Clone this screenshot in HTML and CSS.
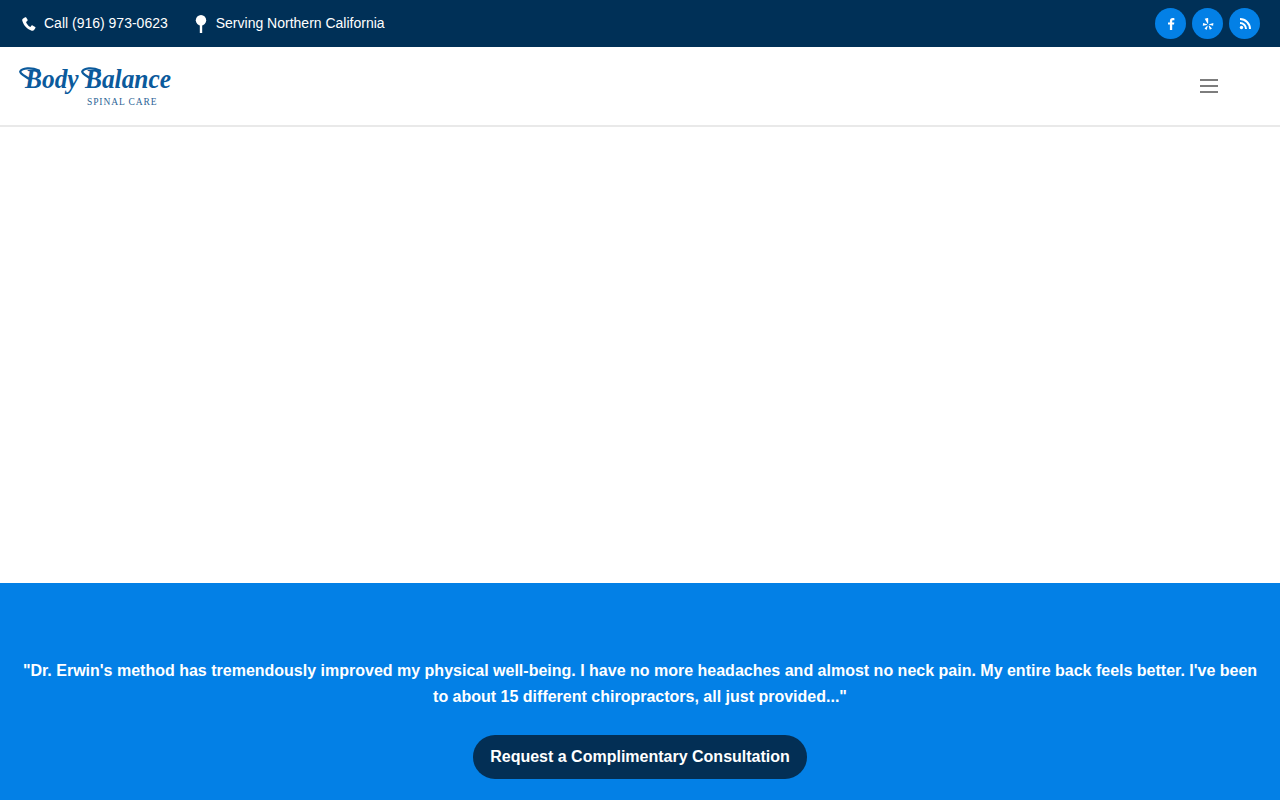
FILE: index.html
```
<!DOCTYPE html>
<html lang="en">
<head>
<meta charset="utf-8">
<title>Body Balance Spinal Care</title>
<link rel="stylesheet" href="styles.css">
</head>
<body>
<div class="topbar">
  <div class="contact">
    <a class="contact-item">
      <svg class="ico-phone" viewBox="0 0 16 16"><path d="M3.600.3 1.300 1.600C.3 2.200 0 3.300.4 4.500c1.500 5 5.800 9.700 10.700 11.100 1.100.4 2.100.1 2.700-.7l1.500-2.300c.3-.5.2-.9-.2-1.200l-3-1.800c-.4-.2-.9-.1-1.200.2l-1.100 1.300c-.3.3-.6.3-.9.100C7 9.900 5.700 8.300 4.800 6.300c-.2-.3-.1-.6.200-.9l1.200-1c.3-.3.400-.8.200-1.200L4.800.7C4.500.2 4 .1 3.600.3Z" fill="#fff"/></svg>
      <span>Call (916) 973-0623</span>
    </a>
    <a class="contact-item">
      <svg class="ico-pin" viewBox="0 0 12 18"><circle cx="6" cy="5.200" r="5.200" fill="#fff"/><rect x="4.800" y="9" width="2.400" height="9" fill="#fff"/></svg>
      <span>Serving Northern California</span>
    </a>
  </div>
  <div class="social">
    <a class="social-btn"><svg viewBox="0 0 12 12"><path d="M7.200 12V6.600h1.800l.3-2.100H7.200V3.200c0-.6.200-1 1-1h1.200V.2C9 .1 8.400 0 7.700 0 6 0 4.900 1 4.900 2.900v1.600H3v2.100h1.900V12Z" fill="#fff"/></svg></a>
    <a class="social-btn"><svg viewBox="0 0 12 12"><g fill="#fff"><path d="M5.300 0 2.700.7 5.400 5.500c.3.400.8.300.8-.2V.5C6.200.1 5.800-.1 5.300 0Z"/><path d="M4.900 6.200 1.100 5 .8 7.700l4-.8c.5-.1.500-.6.100-.7Z"/><path d="M5.200 7.800 2.500 10.600l2.100 1.300 1.100-3.800c.1-.4-.2-.5-.5-.3Z"/><path d="M6.700 7.900l1.100 3.900 2.200-1.300-2.800-2.900c-.3-.2-.6 0-.5.300Z"/><path d="M7.100 6.800l4 .9.300-2.600-4.200 1.200c-.4.100-.4.400-.1.500Z"/></g></svg></a>
    <a class="social-btn"><svg viewBox="0 0 12 12"><g fill="none" stroke="#fff" stroke-width="2"><path d="M1 5a6 6 0 0 1 6 6"/><path d="M1 1a10 10 0 0 1 10 10"/></g><circle cx="2.500" cy="9.500" r="1.700" fill="#fff"/></svg></a>
  </div>
</div>
<header class="navbar">
  <a class="logo" aria-label="Body Balance Spinal Care">
    <svg class="logo-art" viewBox="0 0 152 42">
      <text class="logo-name" x="6" y="22" textLength="146" lengthAdjust="spacingAndGlyphs">Body Balance</text>
      <g class="logo-swash">
        <path d="M20 4.500C12 1 3 2 1.200 5.500 1 8 6 10 9.500 12.500"/>
        <path d="M81 4.500C73 1 65 2 63.200 5.500 63 8 68 10 71.500 12.500"/>
      </g>
      <text class="logo-sub" x="68" y="39">SPINAL CARE</text>
    </svg>
  </a>
  <button class="menu-btn" aria-label="Menu"><span></span><span></span><span></span></button>
</header>
<main class="hero"></main>
<section class="testimonial">
  <p class="quote">"Dr. Erwin's method has tremendously improved my physical well-being. I have no more headaches and almost no neck pain. My entire back feels better. I've been to about 15 different chiropractors, all just provided..."</p>
  <a class="cta">Request a Complimentary Consultation</a>
</section>
</body>
</html>
```
FILE: styles.css
```
* { box-sizing: border-box; }
html, body { margin: 0; height: 100%; }
body {
  font-family: "Liberation Sans", Arial, sans-serif;
  background: #fff;
  overflow: hidden;
}
.topbar {
  height: 47px;
  background: #003057;
  display: flex;
  align-items: center;
  justify-content: space-between;
  padding: 0 20px 0 22px;
}
.contact { display: flex; align-items: center; gap: 27px; }
.contact-item {
  display: flex;
  align-items: center;
  color: #fff;
  font-size: 14px;
  line-height: 16px;
  padding-bottom: 2px;
}
.ico-phone { width: 14px; height: 14px; margin-right: 8px; margin-top: 2px; }
.ico-pin { width: 12px; height: 18px; margin-right: 9px; margin-top: 3px; }
.social { display: flex; gap: 6px; }
.social-btn {
  width: 31px;
  height: 31px;
  border-radius: 50%;
  background: #0380e6;
  display: flex;
  align-items: center;
  justify-content: center;
}
.social-btn svg { width: 12px; height: 12px; }
.navbar {
  height: 80px;
  background: #fff;
  border-bottom: 2px solid #e9e9e9;
  display: flex;
  align-items: center;
  justify-content: space-between;
  padding: 0 62px 0 19px;
}
.logo { display: block; width: 152px; height: 42px; margin-top: 1px; }
.logo-art { display: block; width: 152px; height: 42px; overflow: visible; }
.logo-name {
  font-family: "Liberation Serif", serif;
  font-style: italic;
  font-weight: 700;
  font-size: 27px;
  fill: #0b5a9c;
}
.logo-swash path { fill: none; stroke: #0b5a9c; stroke-width: 2.200; stroke-linecap: round; }
.logo-sub {
  font-family: "Liberation Serif", serif;
  font-size: 9.500px;
  letter-spacing: .9px;
  fill: #2c6496;
}
.menu-btn {
  width: 18px;
  height: 14px;
  padding: 0;
  border: 0;
  background: none;
  display: flex;
  flex-direction: column;
  justify-content: space-between;
}
.menu-btn span { display: block; height: 2px; background: #7d7d7d; }
.hero { height: 456px; background: #fff; }
.testimonial {
  height: 217px;
  background: #0380e6;
  padding: 75px 20px 0;
  text-align: center;
  color: #fff;
}
.quote {
  margin: 0 auto 25px;
  font-size: 16px;
  font-weight: 700;
  line-height: 26px;
}
.cta {
  display: inline-block;
  height: 44px;
  padding: 0 17px;
  border-radius: 22px;
  background: #032f55;
  color: #fff;
  font-size: 16px;
  font-weight: 700;
  line-height: 43px;
}
```
